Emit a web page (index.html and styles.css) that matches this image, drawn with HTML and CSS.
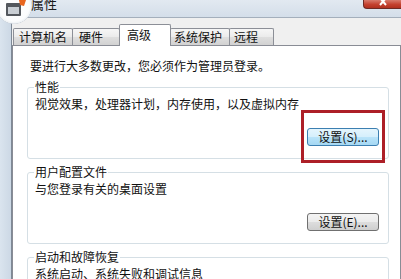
FILE: index.html
```html
<!DOCTYPE html>
<html lang="zh-CN">
<head>
<meta charset="utf-8">
<title>属性</title>
<link rel="stylesheet" href="styles.css">
</head>
<body>
<div class="window">
  <div class="titlebar">
    <div class="app-icon">
      <svg class="app-glyph" width="22" height="18" viewBox="0 0 22 18">
        <rect x="1" y="3" width="15" height="13" rx="1" fill="#54585e"/>
        <rect x="3" y="7" width="11" height="7" fill="#c9ced4"/>
        <path d="M14 0 L21 0 L19 6 L15 5 Z" fill="#e8661f"/>
      </svg>
    </div>
    <span class="title">属性</span>
    <div class="close">
      <svg width="10" height="6" viewBox="0 0 10 6"><path d="M2 -2 L8 5 M8 -2 L2 5" stroke="#fff" stroke-width="2"/></svg>
    </div>
  </div>
  <div class="frame">
    <div class="frame-side"></div>
    <div class="client">
      <div class="tabs">
        <div class="tab t1">计算机名</div>
        <div class="tab t2">硬件</div>
        <div class="tab t3 active">高级</div>
        <div class="tab t4">系统保护</div>
        <div class="tab t5">远程</div>
      </div>
      <div class="panel">
        <p class="intro">要进行大多数更改，您必须作为管理员登录。</p>
        <fieldset class="group">
          <legend>性能</legend>
          <p class="desc">视觉效果，处理器计划，内存使用，以及虚拟内存</p>
          <div class="actions">
            <div class="btn-wrap">
              <button class="btn focused" type="button">设置(S)...</button>
              <span class="highlight"></span>
            </div>
          </div>
        </fieldset>
        <fieldset class="group">
          <legend>用户配置文件</legend>
          <p class="desc">与您登录有关的桌面设置</p>
          <div class="actions">
            <div class="btn-wrap">
              <button class="btn" type="button">设置(E)...</button>
            </div>
          </div>
        </fieldset>
        <fieldset class="group">
          <legend>启动和故障恢复</legend>
          <p class="desc">系统启动、系统失败和调试信息</p>
        </fieldset>
      </div>
    </div>
  </div>
</div>
</body>
</html>
```

FILE: styles.css
```css
html, body {
  margin: 0;
  padding: 0;
}

body {
  width: 401px;
  height: 279px;
  overflow: hidden;
  font-family: "Noto Sans CJK SC", "Noto Sans", sans-serif;
  font-size: 12px;
  color: #111;
  background: #d3dee9;
}

.window {
  position: relative;
  height: 279px;
  display: flex;
  flex-direction: column;
}

/* ---------- title bar ---------- */
.titlebar {
  position: relative;
  height: 17px;
  flex: none;
  display: flex;
  align-items: flex-start;
  background: linear-gradient(#e2e9f1, #d4dee9);
}

.app-icon {
  position: absolute;
  left: -4px;
  top: -12px;
  width: 36px;
  height: 36px;
  border-radius: 50%;
  background: radial-gradient(circle at 50% 50%, #ffffff 0, #fbfcfd 60%, #eef2f5 68%, rgba(200, 206, 214, 0.9) 70%, rgba(220, 228, 236, 0) 73%);
  z-index: 3;
}

.app-glyph {
  position: absolute;
  left: 9px;
  top: 12px;
}

.title {
  position: relative;
  z-index: 4;
  margin-left: 31px;
  margin-top: -4px;
  font-size: 13px;
  line-height: 16px;
  color: #1b1b1b;
}

.close {
  margin-left: auto;
  width: 38px;
  height: 9px;
  box-sizing: border-box;
  border-left: 1px solid #6e2a24;
  border-bottom: 1px solid #6e2a24;
  border-radius: 0 0 0 4px;
  background: linear-gradient(#d77a6c, #c4412f 55%, #b0301f);
  display: flex;
  justify-content: center;
  align-items: flex-start;
}

/* ---------- frame ---------- */
.frame {
  flex: 1;
  min-height: 0;
  display: flex;
}

.frame-side {
  width: 11px;
  flex: none;
  background: linear-gradient(to right, #dae4ee, #ccd8e5);
}

.client {
  flex: 1;
  min-width: 0;
  display: flex;
  flex-direction: column;
  border-top: 1px solid #a4afbc;
  border-left: 1px solid #7e8996;
  background: #f0f0f0;
  padding-top: 6px;
}

/* ---------- tabs ---------- */
.tabs {
  display: flex;
  align-items: flex-end;
  padding-left: 1px;
  position: relative;
  z-index: 2;
}

.tab {
  box-sizing: border-box;
  height: 17px;
  border: 1px solid #8c8f97;
  border-bottom: none;
  border-radius: 2px 2px 0 0;
  margin-right: -1px;
  padding: 1px 0 0 5px;
  line-height: 14px;
  white-space: nowrap;
  background: linear-gradient(#f6f6f6, #ebebeb 50%, #dedede 52%, #d2d2d2);
}

.t1 { width: 60px; }
.t2 { width: 48px; padding-left: 6px; }
.t3 { width: 52px; }
.t4 { width: 60px; padding-left: 3px; }
.t5 { width: 45px; padding-left: 4px; }

.tab.active {
  height: 22px;
  margin-bottom: -1px;
  padding-top: 3px;
  padding-left: 7px;
  background: #fff;
  position: relative;
  z-index: 2;
}

/* ---------- panel ---------- */
.panel {
  flex: 1;
  background: #fff;
  border: 1px solid #898c95;
  padding: 13px 11px 0 14px;
}

.intro {
  margin: 0 0 7px;
  padding-left: 3px;
  line-height: 14px;
}

.group {
  margin: 0;
  min-width: 0;
  border: 1px solid #d5dfe5;
  border-radius: 3px;
  padding: 3px 9px 12px 7px;
}

.group + .group {
  margin-top: 6px;
}

.group legend {
  padding: 0 1px;
  margin-left: -1px;
  line-height: 14px;
}

.desc {
  margin: 0;
  line-height: 14px;
}

.actions {
  display: flex;
  justify-content: flex-end;
  margin-top: 17px;
}

.btn-wrap {
  position: relative;
}

.btn {
  display: block;
  box-sizing: border-box;
  width: 72px;
  height: 18px;
  padding: 0;
  font-family: inherit;
  font-size: 12px;
  line-height: 16px;
  color: #111;
  border: 1px solid #707070;
  border-radius: 3px;
  background: linear-gradient(#f4f4f4, #ebebeb 50%, #dddddd 52%, #cfcfcf);
}

.btn.focused {
  border-color: #3c7fb1;
  background: linear-gradient(#e5f5fd, #d5effc 50%, #b9e3f9 52%, #a5d8f3);
}

.highlight {
  position: absolute;
  left: -6px;
  top: -18px;
  width: 84px;
  height: 53px;
  box-sizing: border-box;
  border: 3px solid #ad1f27;
  pointer-events: none;
}
```
